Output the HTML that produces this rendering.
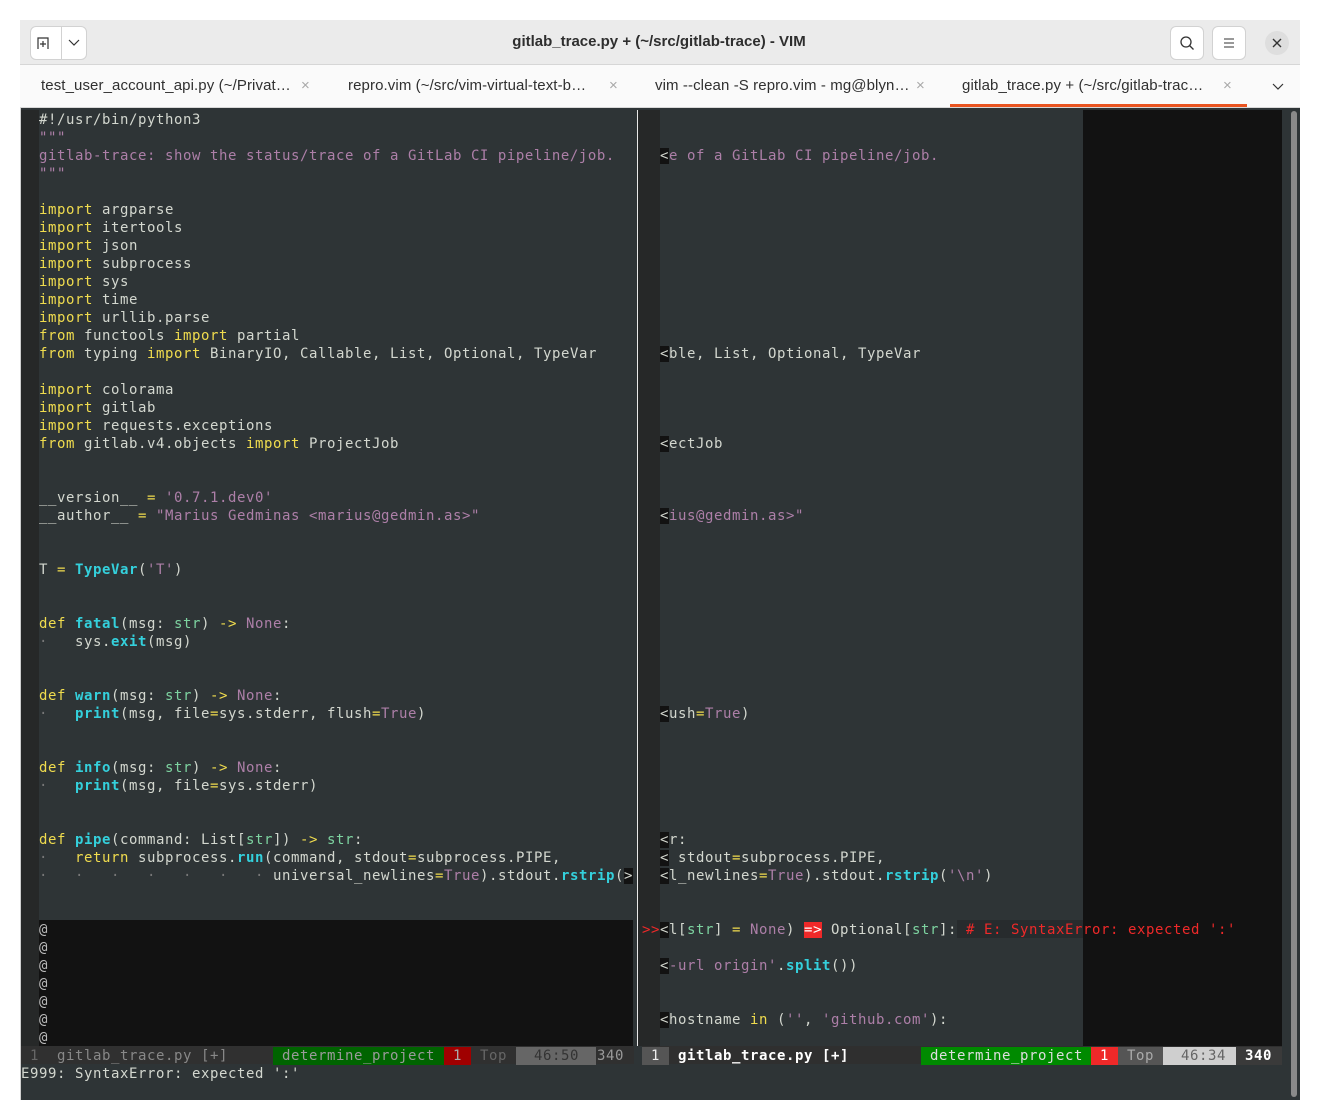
<!DOCTYPE html>
<html><head><meta charset="utf-8"><style>
*{margin:0;padding:0;box-sizing:border-box}
body{width:1320px;height:1120px;background:#fff;position:relative;overflow:hidden;font-family:"Liberation Sans",sans-serif}
.win{position:absolute;left:20px;top:20px;width:1280px;height:1080px;background:#2e3436;border:1px solid #cfcfcf}
.title{position:absolute;left:20px;top:20px;width:1280px;height:45px;background:#ebebeb;border-bottom:1px solid #d6d6d6}
.tabs{position:absolute;left:20px;top:65px;width:1280px;height:43px;background:#fafafa}
.btn{position:absolute;background:#fff;border:1px solid #d2d2d2;border-radius:6px}
.tab{position:absolute;top:77px;font-size:15px;color:#303030;white-space:nowrap;letter-spacing:0.1px}
.x{position:absolute;top:77px;font-size:15px;color:#a8a8a8}
.t{position:absolute;font-family:"DejaVu Sans Mono",monospace;font-size:14px;letter-spacing:0.57px;line-height:18px;height:18px;white-space:pre;color:#d3d7cf;margin-top:1px}
.k{color:#f0dc4e}.f{color:#34d0dc;font-weight:bold}.s{color:#ad7fa8}.g{color:#7dd3a0}.r{color:#ef2929}.m{background:#121212}
.dot{color:#777}
.blk{position:absolute;background:#121212}
</style></head><body>
<div class="win"></div>
<div class="title"></div>
<div class="btn" style="left:30px;top:26px;width:57px;height:34px"></div>
<div style="position:absolute;left:61px;top:27px;width:1px;height:32px;background:#d2d2d2"></div>
<svg style="position:absolute;left:36px;top:35px" width="16" height="16" viewBox="0 0 16 16"><path d="M2 14V3h10v11M7 6v6M4 9h6" stroke="#333" stroke-width="1.2" fill="none"/></svg>
<svg style="position:absolute;left:68px;top:38px" width="12" height="10"><path d="M1 2l5 5 5-5" stroke="#333" stroke-width="1.2" fill="none"/></svg>
<div style="position:absolute;left:0;width:1320px;top:33px;text-align:center;font-size:15px;font-weight:bold;color:#2e2e2e"><span style="position:relative;left:-1px">gitlab_trace.py + (~/src/gitlab-trace) - VIM</span></div>
<div class="btn" style="left:1170px;top:26px;width:34px;height:34px"></div>
<svg style="position:absolute;left:1179px;top:35px" width="16" height="16"><circle cx="7" cy="7" r="5" stroke="#333" stroke-width="1.3" fill="none"/><path d="M10.5 10.5l4 4" stroke="#333" stroke-width="1.3"/></svg>
<div class="btn" style="left:1212px;top:26px;width:34px;height:34px"></div>
<svg style="position:absolute;left:1222px;top:37px" width="14" height="12"><path d="M2 2h10M2 6h10M2 10h10" stroke="#333" stroke-width="1.1"/></svg>
<div style="position:absolute;left:1265px;top:31px;width:24px;height:24px;border-radius:50%;background:#dedede"></div>
<svg style="position:absolute;left:1271px;top:37px" width="12" height="12"><path d="M2 2l8 8M10 2l-8 8" stroke="#333" stroke-width="1.4"/></svg>
<div class="tabs"></div>
<div style="position:absolute;left:20px;top:107px;width:1280px;height:1px;background:#d8d8d8"></div>
<div class="tab" style="left:41px">test_user_account_api.py (~/Privat…</div><div class="x" style="left:301px">×</div>
<div class="tab" style="left:348px">repro.vim (~/src/vim-virtual-text-b…</div><div class="x" style="left:609px">×</div>
<div class="tab" style="left:655px">vim --clean -S repro.vim - mg@blyn…</div><div class="x" style="left:916px">×</div>
<div class="tab" style="left:962px">gitlab_trace.py + (~/src/gitlab-trac…</div><div class="x" style="left:1223px">×</div>
<svg style="position:absolute;left:1272px;top:82px" width="12" height="10"><path d="M1 2l5 5 5-5" stroke="#333" stroke-width="1.2" fill="none"/></svg>
<div style="position:absolute;left:950px;top:104px;width:297px;height:3px;background:#e95420"></div>

<!-- terminal -->
<div style="position:absolute;left:21px;top:108px;width:1261px;height:992px;background:#2e3436"></div>
<div style="position:absolute;left:21px;top:110px;width:18px;height:936px;background:#262828"></div>
<div style="position:absolute;left:637px;top:110px;width:1px;height:936px;background:#e8e8e8"></div>
<div style="position:absolute;left:638px;top:110px;width:22px;height:936px;background:#262828"></div>
<div class="blk" style="left:1083px;top:110px;width:199px;height:936px"></div>
<div style="position:absolute;left:957px;top:920px;width:126px;height:18px;background:#272b2d"></div>
<div class="blk" style="left:39px;top:920px;width:594px;height:126px"></div>
<div style="position:absolute;left:1282px;top:108px;width:18px;height:992px;background:#2e3436"></div>
<div style="position:absolute;left:1291px;top:111px;width:6px;height:986px;border-radius:3px;background:#8a8a8a"></div>

<!-- left pane -->
<div class="t" style="left:39px;top:110px">#!/usr/bin/python3</div>
<div class="t s" style="left:39px;top:128px">"""</div>
<div class="t s" style="left:39px;top:146px">gitlab-trace: show the status/trace of a GitLab CI pipeline/job.</div>
<div class="t s" style="left:39px;top:164px">"""</div>
<div class="t" style="left:39px;top:200px"><span class="k">import</span> argparse</div>
<div class="t" style="left:39px;top:218px"><span class="k">import</span> itertools</div>
<div class="t" style="left:39px;top:236px"><span class="k">import</span> json</div>
<div class="t" style="left:39px;top:254px"><span class="k">import</span> subprocess</div>
<div class="t" style="left:39px;top:272px"><span class="k">import</span> sys</div>
<div class="t" style="left:39px;top:290px"><span class="k">import</span> time</div>
<div class="t" style="left:39px;top:308px"><span class="k">import</span> urllib.parse</div>
<div class="t" style="left:39px;top:326px"><span class="k">from</span> functools <span class="k">import</span> partial</div>
<div class="t" style="left:39px;top:344px"><span class="k">from</span> typing <span class="k">import</span> BinaryIO, Callable, List, Optional, TypeVar</div>
<div class="t" style="left:39px;top:380px"><span class="k">import</span> colorama</div>
<div class="t" style="left:39px;top:398px"><span class="k">import</span> gitlab</div>
<div class="t" style="left:39px;top:416px"><span class="k">import</span> requests.exceptions</div>
<div class="t" style="left:39px;top:434px"><span class="k">from</span> gitlab.v4.objects <span class="k">import</span> ProjectJob</div>
<div class="t" style="left:39px;top:488px">__version__ <span class="k">=</span> <span class="s">'0.7.1.dev0'</span></div>
<div class="t" style="left:39px;top:506px">__author__ <span class="k">=</span> <span class="s">"Marius Gedminas &lt;marius@gedmin.as&gt;"</span></div>
<div class="t" style="left:39px;top:560px">T <span class="k">=</span> <span class="f">TypeVar</span>(<span class="s">'T'</span>)</div>
<div class="t" style="left:39px;top:614px"><span class="k">def</span> <span class="f">fatal</span>(msg: <span class="g">str</span>) <span class="k">-&gt;</span> <span class="s">None</span>:</div>
<div class="t" style="left:39px;top:632px"><span class="dot">·</span>   sys.<span class="f">exit</span>(msg)</div>
<div class="t" style="left:39px;top:686px"><span class="k">def</span> <span class="f">warn</span>(msg: <span class="g">str</span>) <span class="k">-&gt;</span> <span class="s">None</span>:</div>
<div class="t" style="left:39px;top:704px"><span class="dot">·</span>   <span class="f">print</span>(msg, file<span class="k">=</span>sys.stderr, flush<span class="k">=</span><span class="s">True</span>)</div>
<div class="t" style="left:39px;top:758px"><span class="k">def</span> <span class="f">info</span>(msg: <span class="g">str</span>) <span class="k">-&gt;</span> <span class="s">None</span>:</div>
<div class="t" style="left:39px;top:776px"><span class="dot">·</span>   <span class="f">print</span>(msg, file<span class="k">=</span>sys.stderr)</div>
<div class="t" style="left:39px;top:830px"><span class="k">def</span> <span class="f">pipe</span>(command: List[<span class="g">str</span>]) <span class="k">-&gt;</span> <span class="g">str</span>:</div>
<div class="t" style="left:39px;top:848px"><span class="dot">·</span>   <span class="k">return</span> subprocess.<span class="f">run</span>(command, stdout<span class="k">=</span>subprocess.PIPE,</div>
<div class="t" style="left:39px;top:866px"><span class="dot">·   ·   ·   ·   ·   ·   ·</span> universal_newlines<span class="k">=</span><span class="s">True</span>).stdout.<span class="f">rstrip</span>(<span class="m">&gt;</span></div>
<div class="t" style="left:39px;top:920px;color:#bbb">@
@
@
@
@
@
@</div>

<!-- right pane -->
<div class="t" style="left:660px;top:146px"><span class="m">&lt;</span><span class="s">e of a GitLab CI pipeline/job.</span></div>
<div class="t" style="left:660px;top:344px"><span class="m">&lt;</span>ble, List, Optional, TypeVar</div>
<div class="t" style="left:660px;top:434px"><span class="m">&lt;</span>ectJob</div>
<div class="t" style="left:660px;top:506px"><span class="m">&lt;</span><span class="s">ius@gedmin.as&gt;"</span></div>
<div class="t" style="left:660px;top:704px"><span class="m">&lt;</span>ush<span class="k">=</span><span class="s">True</span>)</div>
<div class="t" style="left:660px;top:830px"><span class="m">&lt;</span>r:</div>
<div class="t" style="left:660px;top:848px"><span class="m">&lt;</span> stdout<span class="k">=</span>subprocess.PIPE,</div>
<div class="t" style="left:660px;top:866px"><span class="m">&lt;</span>l_newlines<span class="k">=</span><span class="s">True</span>).stdout.<span class="f">rstrip</span>(<span class="s">'\n'</span>)</div>
<div class="t r" style="left:642px;top:920px">&gt;&gt;</div>
<div class="t" style="left:660px;top:920px"><span class="m">&lt;</span>l[<span class="g">str</span>] <span class="k">=</span> <span class="s">None</span>) <span style="background:#ef2929;color:#fff">=&gt;</span> Optional[<span class="g">str</span>]:<span class="r"> # E: SyntaxError: expected ':'</span></div>
<div class="t" style="left:660px;top:956px"><span class="m">&lt;</span><span class="s">-url origin'</span>.<span class="f">split</span>())</div>
<div class="t" style="left:660px;top:1010px"><span class="m">&lt;</span>hostname <span class="k">in</span> (<span class="s">''</span>, <span class="s">'github.com'</span>):</div>

<!-- status lines -->
<div style="position:absolute;left:21px;top:1046px;width:613px;height:18px;background:#303030"></div>
<div class="t" style="left:21px;top:1046px;color:#666"> 1  <span style="color:#888">gitlab_trace.py [+]</span></div>
<div class="t" style="left:273px;top:1046px;background:#006400;color:#9a9a9a"> determine_project </div>
<div class="t" style="left:444px;top:1046px;background:#a00000;color:#aaa"> 1 </div>
<div class="t" style="left:471px;top:1046px;color:#666"> Top </div>
<div class="t" style="left:516px;top:1046px;background:#666;color:#333;width:80px">  46:50 </div>
<div class="t" style="left:597px;top:1046px;color:#999">340</div>
<div style="position:absolute;left:642px;top:1046px;width:640px;height:18px;background:#2f2f2f"></div>
<div class="t" style="left:642px;top:1046px;background:#555;color:#eee"> 1 </div>
<div class="t" style="left:669px;top:1046px;color:#fff;font-weight:bold"> gitlab_trace.py [+]</div>
<div class="t" style="left:921px;top:1046px;background:#008a00;color:#ddd;width:170px"> determine_project </div>
<div class="t" style="left:1091px;top:1046px;background:#ef2929;color:#fff"> 1 </div>
<div class="t" style="left:1118px;top:1046px;background:#555;color:#aaa;width:45px"> Top </div>
<div class="t" style="left:1163px;top:1046px;background:#cfcfcf;color:#666;width:73px">  46:34 </div>
<div class="t" style="left:1236px;top:1046px;background:#3a3a3a;color:#fff;font-weight:bold;width:46px"> 340</div>
<div class="t" style="left:21px;top:1064px">E999: SyntaxError: expected ':'</div>
</body></html>
